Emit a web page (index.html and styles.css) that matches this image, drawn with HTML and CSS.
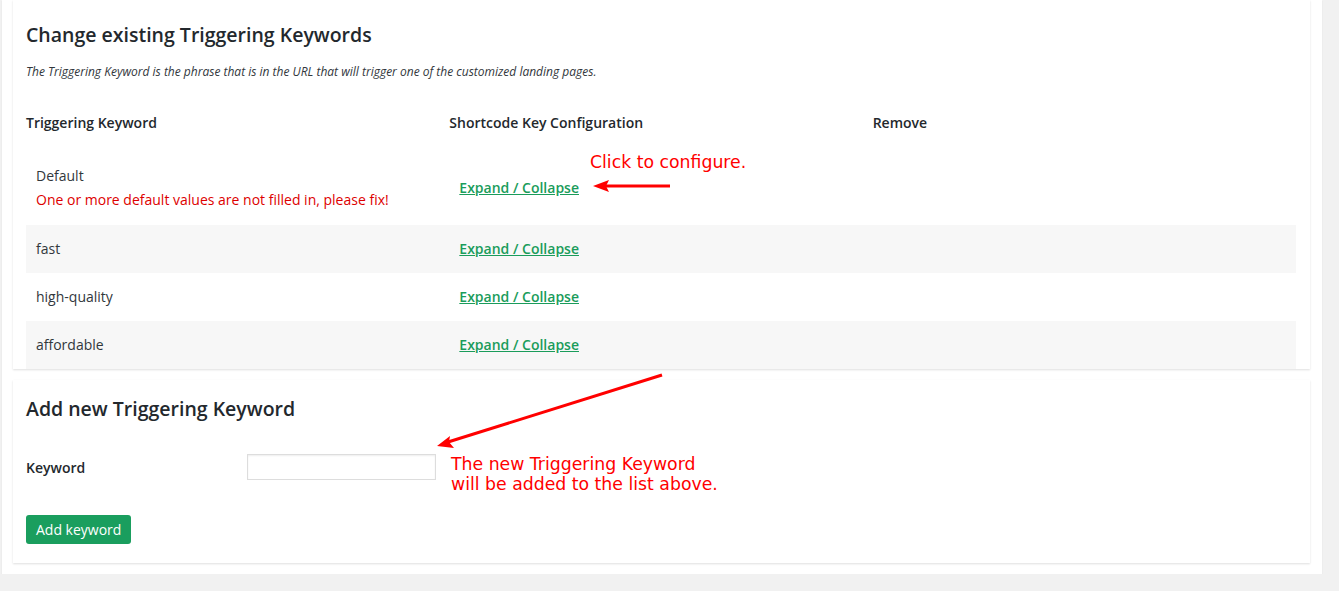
FILE: index.html
```html
<!DOCTYPE html>
<html lang="en">
<head>
    <meta charset="UTF-8">
    <title>Triggering Keywords</title>
    <link rel="stylesheet" href="styles.css">
</head>
<body>
<div class="wrap">
    <div class="card">
        <h2>Change existing Triggering Keywords</h2>
        <p class="desc">The Triggering Keyword is the phrase that is in the URL that will trigger one of the customized landing pages.</p>
        <table class="keywords">
            <thead>
                <tr>
                    <th>Triggering Keyword</th>
                    <th>Shortcode Key Configuration</th>
                    <th>Remove</th>
                </tr>
            </thead>
            <tbody>
                <tr class="first">
                    <td>Default<br><span class="error">One or more default values are not filled in, please fix!</span></td>
                    <td><a href="#">Expand / Collapse</a></td>
                    <td></td>
                </tr>
                <tr class="odd">
                    <td>fast</td>
                    <td><a href="#">Expand / Collapse</a></td>
                    <td></td>
                </tr>
                <tr>
                    <td>high-quality</td>
                    <td><a href="#">Expand / Collapse</a></td>
                    <td></td>
                </tr>
                <tr class="odd">
                    <td>affordable</td>
                    <td><a href="#">Expand / Collapse</a></td>
                    <td></td>
                </tr>
            </tbody>
        </table>
    </div>

    <div class="card add">
        <h2>Add new Triggering Keyword</h2>
        <div class="form-row">
            <label for="keyword">Keyword</label>
            <input type="text" id="keyword">
        </div>
        <button type="button">Add keyword</button>
    </div>

    <!-- annotations -->
    <div class="note note-1">Click to configure.</div>
    <div class="note note-2">The new Triggering Keyword<br>will be added to the list above.</div>
    <svg class="arrows" width="1339" height="591" viewBox="0 0 1339 591">
        <line x1="670" y1="186" x2="604" y2="186" stroke="#f00" stroke-width="3"/>
        <polygon points="593,186 609,180 606,186 609,192" fill="#f00"/>
        <line x1="662" y1="375" x2="448" y2="442" stroke="#f00" stroke-width="3"/>
        <polygon points="437,446 450,436 449,442 454,448" fill="#f00"/>
    </svg>
</div>
</body>
</html>
```

FILE: styles.css
```css
body {
    margin: 0;
    background-color: #f1f1f1;
    font-family: "Open Sans", sans-serif;
    font-size: 14px;
    color: #32373c;
}

.wrap {
    position: relative;
    width: 1297px;
    margin-left: 2px;
    padding: 0 12px 11px 11px;
    background-color: #fff;
    box-shadow: 0 1px 1px rgba(0, 0, 0, 0.1);
}

.card {
    background-color: #fff;
    padding: 0 14px 0 13px;
    box-shadow: 0 1px 2px rgba(0, 0, 0, 0.13);
}

.card h2 {
    margin: 0;
    padding-top: 20px;
    font-size: 19.5px;
    font-weight: 600;
    line-height: 30px;
    color: #23282d;
}

.desc {
    margin: 14px 0 0;
    font-size: 12px;
    font-style: italic;
    line-height: 16px;
}

.keywords {
    width: 100%;
    margin-top: 20px;
    border-collapse: collapse;
    table-layout: fixed;
}

.keywords th {
    text-align: left;
    font-weight: 600;
    line-height: 16px;
    padding: 15px 0;
    color: #23282d;
}

.keywords td {
    padding: 12px 10px;
    line-height: 24px;
    vertical-align: middle;
}

.keywords tr.first td {
    padding-top: 18px;
    padding-bottom: 13px;
}

.keywords tr.odd td {
    background-color: #f7f7f7;
}

.error {
    color: #dd0000;
}

.keywords a {
    color: #1a9c5b;
    font-weight: 600;
    text-decoration: underline;
}

.card.add {
    margin-top: 11px;
    padding-bottom: 19px;
}

.card.add h2 {
    padding-top: 14px;
}

.form-row {
    display: flex;
    align-items: center;
    margin-top: 30px;
}

.form-row label {
    width: 221px;
    font-weight: 600;
    color: #23282d;
}

.form-row input {
    width: 189px;
    height: 26px;
    box-sizing: border-box;
    border: 1px solid #ddd;
    box-shadow: inset 0 1px 2px rgba(0, 0, 0, 0.07);
    margin: 0;
}

.card.add button {
    margin-top: 35px;
    height: 29px;
    padding: 0 10px;
    border: none;
    border-radius: 3px;
    background-color: #1a9e5e;
    color: #fff;
    font-family: "Open Sans", sans-serif;
    font-size: 14px;
    cursor: pointer;
}

.note {
    position: absolute;
    color: #ff0000;
    font-family: "DejaVu Sans", sans-serif;
    font-size: 17.3px;
    line-height: 20px;
}

.note-1 {
    left: 588px;
    top: 152px;
}

.note-2 {
    left: 449px;
    top: 454px;
}

.arrows {
    position: absolute;
    left: -2px;
    top: 0;
    pointer-events: none;
}
```
